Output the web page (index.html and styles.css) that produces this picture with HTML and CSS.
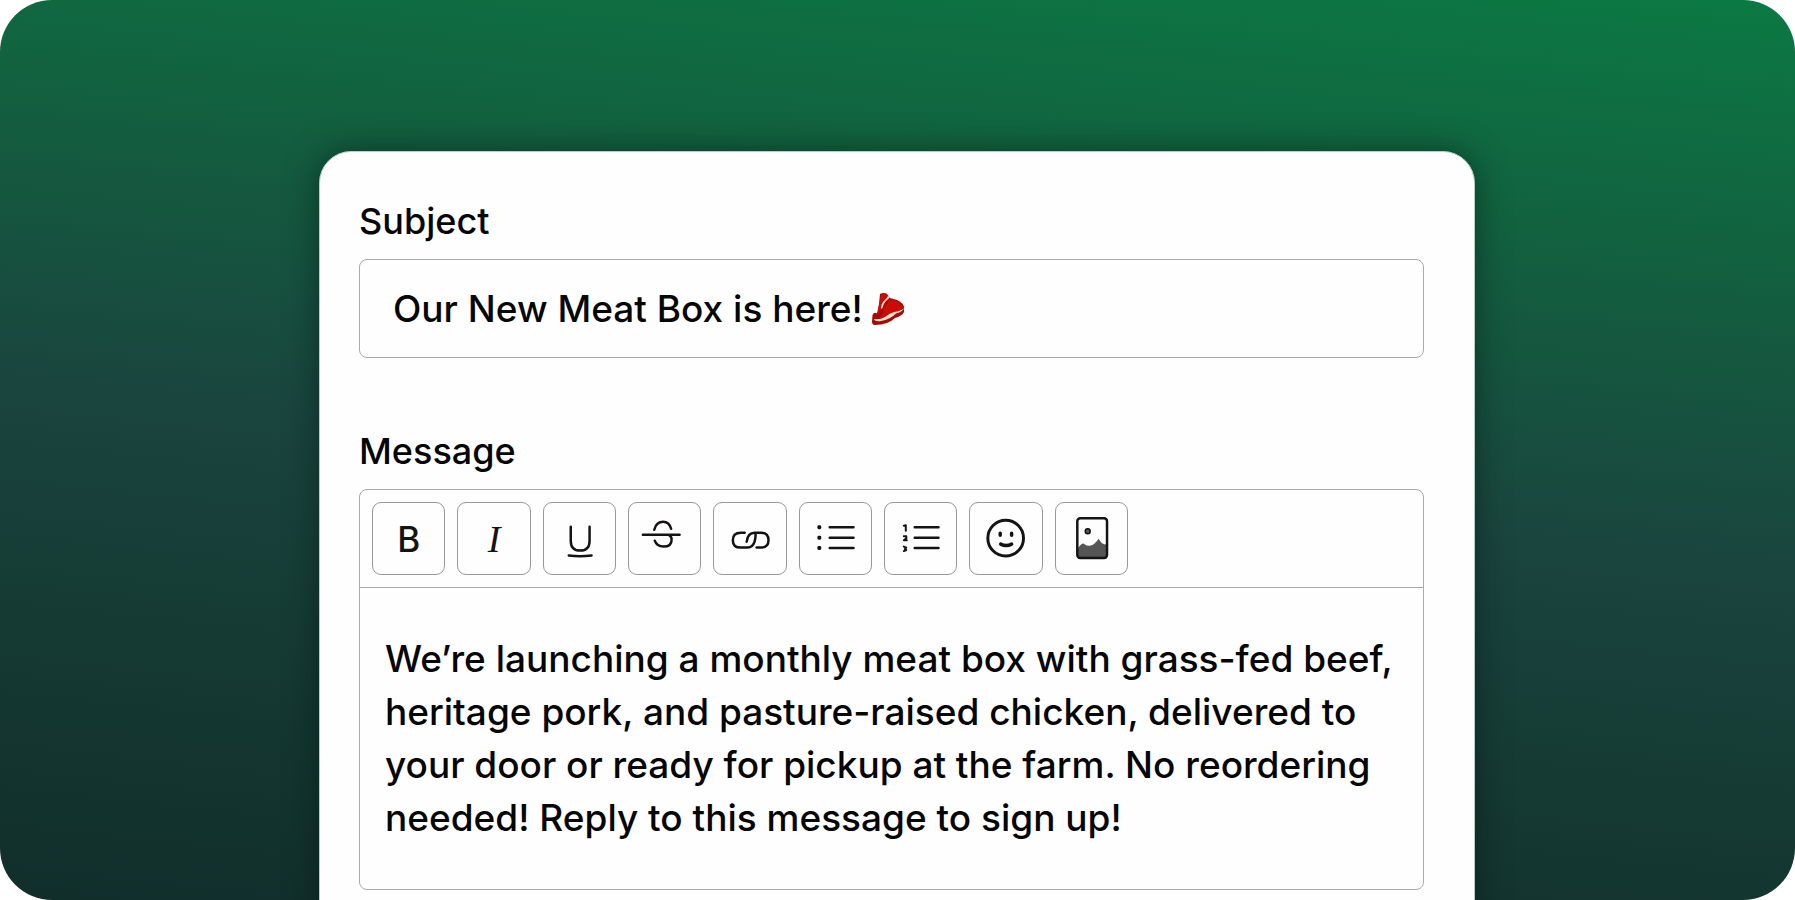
FILE: index.html
```html
<!DOCTYPE html>
<html lang="en">
<head>
<meta charset="utf-8">
<title>Compose message</title>
<link rel="stylesheet" href="styles.css">
</head>
<body>
<main class="stage">
  <form class="card">
    <div class="field">
      <label class="label" for="subject">Subject</label>
      <div class="subject">
        <input class="subject-input" id="subject" type="text" value="Our New Meat Box is here!">
        <svg class="meat" viewBox="0 0 34 34" aria-hidden="true">
          <path fill="#a50a06" d="M9 2q4-2 7 0l3 4 7 2q7 3 7 8v4q-2 4-9 6-7 7-20 7-3-.5-3-3l.5-7Q3 20 5 21q1 1 1.500-1L8 12z"/>
          <path fill="#cb0c08" d="M10 3q3-2 6 0l1 2-6 8-1 4-3 5-1 1 1-5zM19 7l6 2q6 3 6.500 7-3 4-9 5-6 5-15 6 4-3 5-10z"/>
          <path fill="#f9e3cf" d="M19 5q-1 1.500-4 4-3 3-3.500 7l-1.500 1q0-6 4-9 2-2 3-4zM33 16q-1 3.500-8 5.500-6 6-15 7.500-6 1-7-2 6 1 11-2 5-4 9-5 7-1 10-4z"/>
        </svg>
      </div>
    </div>
    <div class="field">
      <label class="label" for="message">Message</label>
      <div class="editor">
        <div class="toolbar" role="toolbar" aria-label="Formatting">
          <button class="tool tool-bold" type="button" aria-label="Bold">B</button>
          <button class="tool tool-italic" type="button" aria-label="Italic">I</button>
          <button class="tool" type="button" aria-label="Underline"><svg viewBox="0 0 72 72"><path stroke-width="2.500" d="M27 24v14q0 10 9.500 10T46 38V24M25 53q11 1.500 23 0"/></svg></button>
          <button class="tool" type="button" aria-label="Strikethrough"><svg viewBox="0 0 72 72"><path stroke-width="2.500" d="M14 32h37M25.500 27q2-8 9-8 6 0 8 7M41 33q2 1 2 4 0 7-8 7-7 0-9-6"/></svg></button>
          <button class="tool" type="button" aria-label="Link"><svg viewBox="0 0 72 72"><path stroke-width="2.500" d="M31 30h-4q-8 0-8 7.500t8 7.500h7q5 0 7-6 1-4 1-7M33 39q1-9 8-9h6q8 0 8 7.500T47 45h-4"/></svg></button>
          <button class="tool" type="button" aria-label="Bulleted list"><svg viewBox="0 0 72 72"><path stroke-width="2.500" d="M30 24.500h24M30 35h24M30 45.500h24"/><path stroke-width="3" d="M19 24v1h1v-1zM19 34.500v1h1v-1zM19 45v1h1v-1z"/></svg></button>
          <button class="tool" type="button" aria-label="Numbered list"><svg viewBox="0 0 72 72"><path stroke-width="2.500" d="M30 24.500h24M30 35h24M30 45.500h24"/><path stroke-width="2" d="M19 23l2-.5v5.500M19 33.500h2.500v2L19 37.500h3M19 44l2.500 1-1.500 1.500 1.500 1-2.500 1"/></svg></button>
          <button class="tool" type="button" aria-label="Emoji"><svg viewBox="0 0 72 72"><circle cx="36" cy="35.500" r="18" stroke-width="3"/><path stroke-width="3.500" d="M30.500 30.500v2M42 30.500v2M31 41.500q5.500 3 11 0"/></svg></button>
          <button class="tool" type="button" aria-label="Image"><svg viewBox="0 0 72 72"><path fill="#555" stroke="none" d="M22 46q4-6 6-5 4 3 7 2 4-1 8-7 3 6 8 6V56H22z"/><rect x="21.500" y="15.500" width="30" height="40" rx="3" stroke-width="2.500"/><circle cx="32" cy="28.500" r="2.500" fill="#555" stroke-width="1.500"/></svg></button>
        </div>
        <textarea class="message" id="message" rows="4">We’re launching a monthly meat box with grass-fed beef, heritage pork, and pasture-raised chicken, delivered to your door or ready for pickup at the farm. No reordering needed! Reply to this message to sign up!</textarea>
      </div>
    </div>
  </form>
</main>
</body>
</html>
```
FILE: styles.css
```css
* { box-sizing: border-box; }

body {
  margin: 0;
  background: #fff;
  color: #060606;
  font-family: Inter, "Liberation Sans", sans-serif;
}

.stage {
  height: 100vh;
  padding: 151px 320px 0 319px;
  overflow: hidden;
  border-radius: 52px;
  background:
    linear-gradient(186deg, #0b7943 0%, #116540 20%, #1a443e 53%, #143731 80%, #112e2b 100%);
}

.card {
  display: flex;
  flex-direction: column;
  gap: 71px;
  padding: 47px 50px 64px 39px;
  border: 1px solid #b5cfc3;
  border-radius: 32px;
  background: #fefefe;
  box-shadow: 0 0 32px rgba(0, 20, 15, 0.5);
}

.field {
  display: flex;
  flex-direction: column;
  gap: 16px;
}

.label {
  font-size: 36px;
  font-weight: 500;
  line-height: 44px;
}

.subject {
  display: flex;
  align-items: center;
  gap: 8px;
  height: 99px;
  padding: 0 33px;
  border: 1px solid #aaa;
  border-radius: 8px;
}

.subject-input,
.message {
  border: 0;
  padding: 0;
  background: none;
  color: inherit;
  font: inherit;
  font-weight: 500;
  outline: 0;
}

.subject-input {
  field-sizing: content;
  font-size: 37px;
}

.meat {
  width: 34px;
  height: 34px;
}

.editor {
  display: flex;
  flex-direction: column;
  border: 1px solid #aaa;
  border-radius: 8px;
}

.toolbar {
  display: grid;
  grid-template-columns: repeat(9, 1fr);
  gap: 12px;
  padding: 12px 295px 12px 12px;
  border-bottom: 1px solid #aaa;
}

.tool {
  aspect-ratio: 1;
  padding: 0;
  border: 1px solid #999;
  border-radius: 9px;
  background: none;
  color: #151212;
}

.tool-bold {
  font: 500 35px Inter, sans-serif;
}

.tool-italic {
  font: italic 38px "Liberation Serif", serif;
}

.tool svg {
  display: block;
  width: 100%;
  fill: none;
  stroke: #151212;
  stroke-linecap: round;
  stroke-linejoin: round;
}

.message {
  display: block;
  height: 301px;
  padding: 44px 25px;
  font-size: 37px;
  line-height: 53px;
  resize: none;
  overflow: hidden;
}
```
